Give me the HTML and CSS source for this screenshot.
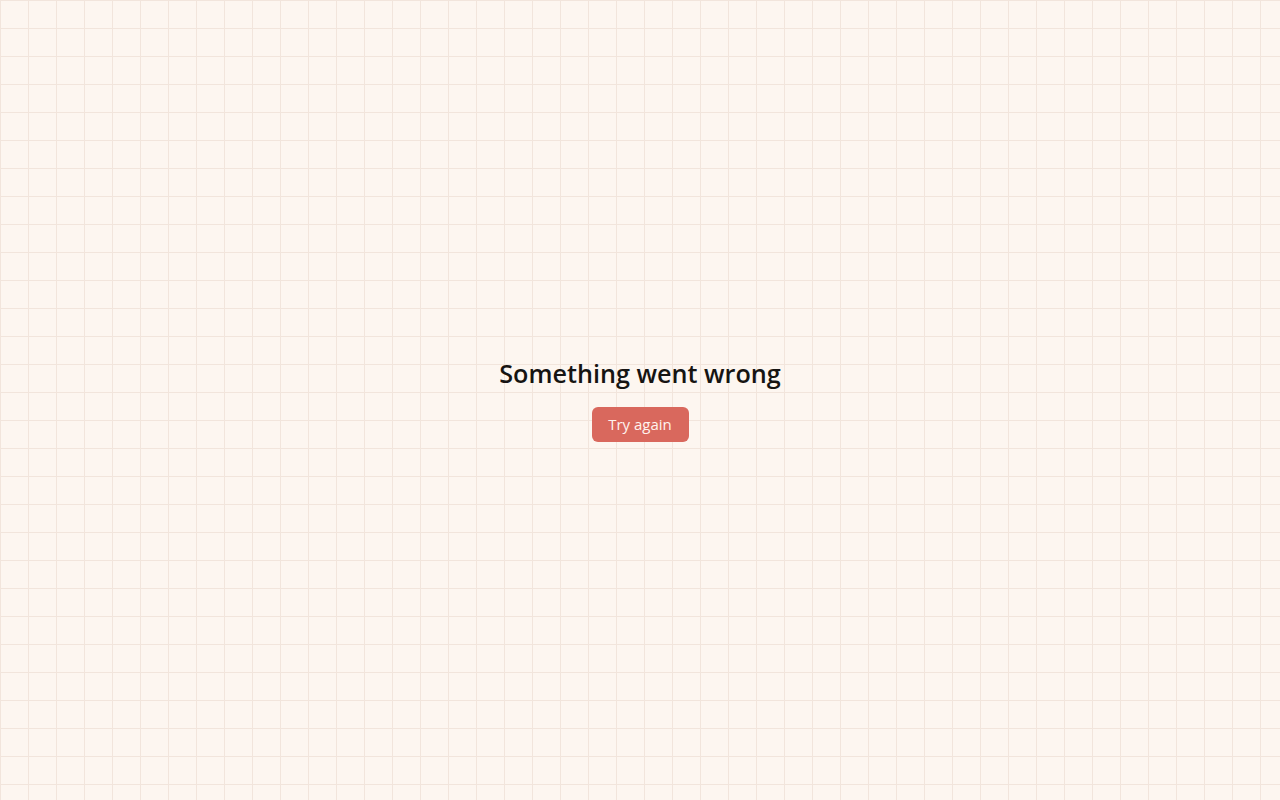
FILE: index.html
```html
<!DOCTYPE html>
<html lang="en">
<head>
<meta charset="utf-8">
<title>Error</title>
<link rel="stylesheet" href="styles.css">
</head>
<body>
<main class="error">
  <h1 class="error-title">Something went wrong</h1>
  <button class="retry-btn" type="button">Try again</button>
</main>
</body>
</html>
```
FILE: styles.css
```css
html, body {
  margin: 0;
  padding: 0;
  height: 100%;
}
body {
  background-color: #fdf6f0;
  background-image:
    linear-gradient(to right, #f2e5dc 1px, transparent 1px),
    linear-gradient(to bottom, #f2e5dc 1px, transparent 1px);
  background-size: 28px 28px;
  font-family: "Open Sans", "Liberation Sans", sans-serif;
  color: #161412;
}
.error {
  box-sizing: border-box;
  min-height: 100vh;
  padding-bottom: 3px;
  display: flex;
  flex-direction: column;
  align-items: center;
  justify-content: center;
  gap: 17px;
}
.error-title {
  margin: 0;
  font-size: 25.2px;
  font-weight: 600;
  line-height: 34px;
  letter-spacing: 0;
}
.retry-btn {
  font-family: "Open Sans", "Liberation Sans", sans-serif;
  font-size: 15px;
  color: #fff3ee;
  background: #d9685d;
  border: none;
  border-radius: 6px;
  width: 97px;
  height: 35px;
  padding: 0;
}
```
